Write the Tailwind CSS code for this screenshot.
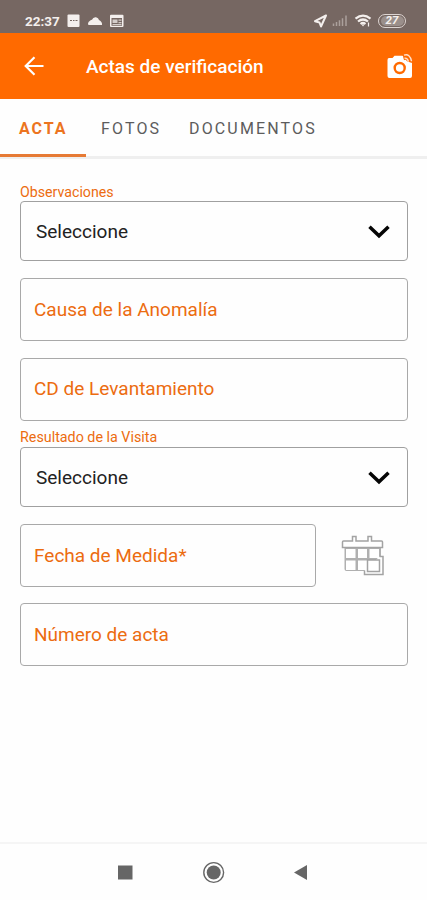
<!DOCTYPE html>
<html lang="es">
<head>
<meta charset="utf-8">
<meta name="viewport" content="width=device-width, initial-scale=1">
<title>Actas de verificación</title>
<script src="https://cdn.jsdelivr.net/npm/@tailwindcss/browser@4"></script>
</head>
<body class="bg-[#fefefe]">
<div class="flex h-[900px] w-[427px] flex-col overflow-hidden bg-[#fefefe] font-[Roboto,sans-serif] text-[#ec6c10]">
  <div class="flex h-[33px] shrink-0 items-end justify-between bg-[#766762] pr-[21px] pb-[5px] pl-[25px] text-[#f4efed]">
    <div class="flex h-[14px] items-center">
      <span class="w-[42px] text-[13.5px] leading-[14px] font-bold whitespace-nowrap">22:37</span>
      <svg class="h-[14px] w-[58px]" viewBox="0 0 58 14" fill="currentColor">
        <rect x="0.5" y="0.5" width="12" height="12.5" rx="1"/>
        <path d="M3 6.5h2m1 0h1.5m1 0h2" stroke="#766762" stroke-width="1.2"/>
        <path d="M21.500 11q-1.500-2 1.500-4.200q1-.8 2-1q1-3 4-2.600q2.500.4 3 2.800q3.500 1.800 3 5z"/>
        <path fill-rule="evenodd" d="M44 .8h11.500q1 0 1 1v10.200q0 1-1 1H44q-1 0-1-1V1.800q0-1 1-1zM44.500 4v7.700H55V4z"/>
        <path d="M45.500 5.500h5v3.500h-5zM51.500 5.500h3v1.200h-3zM51.500 8h3v1.200h-3zM45.500 10h9v1h-9z" opacity=".75"/>
      </svg>
    </div>
    <div class="flex h-[14px] items-center">
      <svg class="h-[14px] w-[64px]" viewBox="0 0 64 14" fill="none" stroke="currentColor">
        <path d="M13 1.500L2 7.200l4.500 1.300L8 12.500z" stroke-width="2" stroke-linejoin="round"/>
        <path d="M20.500 12V9.500M23.500 12V8M26.500 12V6.200M29.500 12V4.200M33 12V1.500" stroke="#aba09c" stroke-width="1.500"/>
        <g stroke-width="2.200"><path d="M42.500 4.700q7.500-6 15 0M45 7.500q5-4 10 0M47.500 10q2.500-2 5 0"/></g>
        <path d="M48.500 10.500h3L50 12.500z" fill="currentColor" stroke="none"/>
        <path d="M55.500 12.500V8.500" stroke-width="1.200"/>
      </svg>
      <span class="ml-[1px] flex h-[14px] w-[28px] items-center justify-center rounded-full border-[1.500px] border-[#ddd5d2]">
        <span class="flex h-[10px] w-[23px] items-center justify-center rounded-full bg-[#9a8f8b] text-[11.500px] leading-none font-bold italic">27</span>
      </span>
    </div>
  </div>

  <header class="flex h-[66px] shrink-0 items-center bg-[#ff6a00] pr-[13px] pl-[23px] text-white">
    <svg class="h-5 w-[22px]" viewBox="0 0 22 20" fill="none" stroke="currentColor" stroke-width="2.200"><path d="M20.500 10H2.800M11.500 1.200L2.700 10l8.800 8.800"/></svg>
    <h1 class="ml-[41px] pt-[2px] text-[19px] font-medium whitespace-nowrap">Actas de verificación</h1>
    <svg class="ml-auto h-[26px] w-[28px]" viewBox="0 0 28 26">
      <path d="M3 5h3.500L8.500 2.800h8L20 6l5.500 2q.5.500.5 1.500V23q0 2-2 2H3.500q-2 0-2-2V7q0-2 1.500-2z" fill="white"/>
      <circle cx="13.700" cy="15" r="5" fill="white" stroke="#ff6a00" stroke-width="2.400"/>
      <path d="M17 3.500q8-5 9 6.500l-3-1-5-2z" fill="#ff6a00"/>
      <path d="M18 2.200q6-2 7.500 6M18.500 5.200q3-.5 4 3.500" fill="none" stroke="#ffe1cc" stroke-width="1.400"/>
      <circle cx="19.300" cy="8" r="1.200" fill="white"/>
    </svg>
  </header>

  <nav class="flex h-[60px] shrink-0 border-b-[3px] border-[#efefef] text-[16px] leading-[60px] tracking-[2.150px] text-[#5c5c5c]">
    <div class="-mb-[3px] h-[58px] w-[86px] border-b-[3px] border-[#e67a35] pl-[19px] font-bold tracking-[1.900px] text-[#ec7420]">ACTA</div>
    <div class="w-[103px] pl-[15px]">FOTOS</div>
    <div>DOCUMENTOS</div>
  </nav>

  <main class="flex grow flex-col pr-[19px] pl-[20px] text-[19px]">
    <div class="mt-[25px] h-[17px] text-[14.200px] leading-[17px]">Observaciones</div>
    <div class="flex h-[60px] items-center justify-between rounded-[4px] border-[1.500px] border-[#a0a0a0] pt-[2px] pr-[17px] pl-[15px] text-[#222]">
      <span>Seleccione</span>
      <svg class="h-[14px] w-[22px]" viewBox="0 0 22 14" fill="none" stroke="#050505" stroke-width="3.500"><path d="M1.500 1.800l9.500 9 9.500-9"/></svg>
    </div>
    <div class="mt-[17px] flex h-[63px] items-center rounded-[4px] border border-[#a9a9a9] pt-[2px] pl-[13px]">Causa de la Anomalía</div>
    <div class="mt-[17px] flex h-[63px] items-center rounded-[4px] border border-[#a9a9a9] pl-[13px]">CD de Levantamiento</div>
    <div class="mt-[8px] h-[17px] text-[14.300px] leading-[17px]">Resultado de la Visita</div>
    <div class="mt-[1px] flex h-[60px] items-center justify-between rounded-[4px] border-[1.500px] border-[#a0a0a0] pt-[2px] pr-[17px] pl-[15px] text-[#222]">
      <span>Seleccione</span>
      <svg class="h-[14px] w-[22px]" viewBox="0 0 22 14" fill="none" stroke="#050505" stroke-width="3.500"><path d="M1.500 1.800l9.500 9 9.500-9"/></svg>
    </div>
    <div class="mt-[17px] flex items-center">
      <div class="flex h-[63px] w-[296px] items-center rounded-[4px] border border-[#a9a9a9] pt-[1px] pl-[13px]">Fecha de Medida*</div>
      <svg class="ml-[25px] h-[42px] w-[44px]" viewBox="0 0 44 42" fill="white" stroke="#a3a3a3" stroke-width="1.500">
        <path d="M3.500 12H40v24H5.500q-2 0-2-2z" fill="#b0b0b0" stroke="none"/>
        <path d="M5 14h9.500v9H5zM17 14h9v9h-9zM28.500 14H38v9h-9.500zM5 25.500h9.500v9.500H5zM17 25.500h9v9.500h-9z" stroke="none"/>
        <path d="M23.500 35.500V39.500h18.500V21.500h-3.500"/>
        <path d="M26.500 25h12v11.500h-12z"/>
        <path d="M1.500 7q0-1 1-1H11.500V1.500H15V6h12V1.500h3.500V6H40.500q1 0 1 1v5.500H1.500z"/>
      </svg>
    </div>
    <div class="mt-[16px] flex h-[63px] items-center rounded-[4px] border border-[#a9a9a9] pt-[2px] pl-[13px]">Número de acta</div>
  </main>

  <footer class="h-[58px] shrink-0 border-t-2 border-[#f5f5f5]">
    <svg class="h-[56px] w-[427px]" viewBox="0 0 427 56" fill="#666">
      <rect x="118" y="21.500" width="14.500" height="14"/>
      <circle cx="213.700" cy="28.500" r="9.900" fill="none" stroke="#666" stroke-width="1.400"/>
      <circle cx="213.700" cy="28.500" r="7"/>
      <path d="M307 21v15L294 28.500z"/>
    </svg>
  </footer>
</div>
</body>
</html>
